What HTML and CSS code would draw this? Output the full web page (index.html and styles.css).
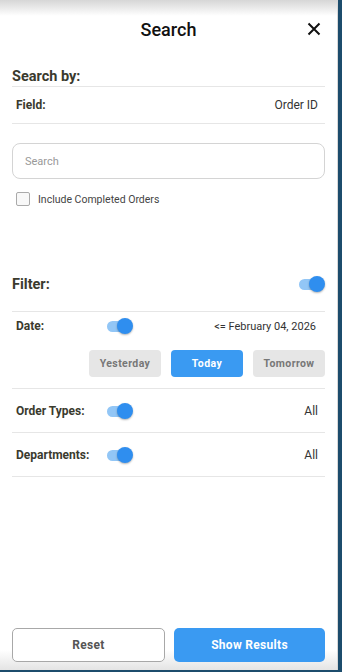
FILE: index.html
```html
<!DOCTYPE html>
<html lang="en">
<head>
  <meta charset="UTF-8" />
  <meta name="viewport" content="width=device-width, initial-scale=1.0" />
  <title>Search</title>
  <link rel="stylesheet" href="styles.css">
</head>
<body>
  <div class="panel">
    <div class="header">
      <span class="title">Search</span>
      <button class="close" aria-label="Close">
        <svg width="14" height="14" viewBox="0 0 14 14"><path d="M1.5 1.5 L12.5 12.5 M12.5 1.5 L1.5 12.5" stroke="#111" stroke-width="2" fill="none"/></svg>
      </button>
    </div>

    <div class="section-title">Search by:</div>
    <div class="row field-row">
      <span class="label">Field:</span>
      <span class="value">Order ID</span>
    </div>

    <input class="search-input" type="text" placeholder="Search" />

    <label class="check-row">
      <span class="checkbox"></span>
      <span>Include Completed Orders</span>
    </label>

    <div class="filter-head">
      <span class="section-title-plain">Filter:</span>
      <span class="toggle on"><span class="thumb"></span></span>
    </div>

    <div class="date-block">
      <div class="row date-row">
        <span class="label col">Date:</span>
        <span class="toggle on"><span class="thumb"></span></span>
        <span class="value push date-value">&lt;= February 04, 2026</span>
      </div>
      <div class="day-buttons">
        <button class="day">Yesterday</button>
        <button class="day active">Today</button>
        <button class="day">Tomorrow</button>
      </div>
    </div>

    <div class="row toggle-row">
      <span class="label col">Order Types:</span>
      <span class="toggle on"><span class="thumb"></span></span>
      <span class="value push">All</span>
    </div>
    <div class="row toggle-row">
      <span class="label col">Departments:</span>
      <span class="toggle on"><span class="thumb"></span></span>
      <span class="value push">All</span>
    </div>

    <div class="footer">
      <button class="btn-reset">Reset</button>
      <button class="btn-show">Show Results</button>
    </div>
  </div>
</body>
</html>
```

FILE: styles.css
```css
html, body {
  margin: 0;
  padding: 0;
}

body {
  font-family: Roboto, "Liberation Sans", Arial, sans-serif;
  background: #1c4c6c;
  color: #3a3a2e;
}

.panel {
  box-sizing: border-box;
  width: 338px;
  height: 670px;
  padding: 0 12px 8px 12px;
  display: flex;
  flex-direction: column;
  background: linear-gradient(#d6d6d6 0px, #ffffff 16px, #ffffff 650px, #e4e4e4 670px);
  border-right: 1px solid #d8d8d8;
}

.header {
  height: 58px;
  display: flex;
  align-items: center;
  justify-content: center;
  position: relative;
}

.title {
  font-size: 18px;
  font-weight: 500;
  color: #111;
}

.close {
  position: absolute;
  right: 4px;
  top: 22px;
  border: none;
  background: none;
  padding: 0;
  width: 14px;
  height: 14px;
  line-height: 0;
}

.section-title {
  padding-top: 10px;
  line-height: 18px;
  font-size: 14.5px;
  font-weight: 700;
  border-bottom: 1px solid #e6e6e6;
}

.row {
  display: flex;
  align-items: center;
  padding: 0 7px 0 4px;
  border-bottom: 1px solid #e6e6e6;
}

.field-row {
  height: 36px;
}

.label {
  font-size: 12px;
  font-weight: 700;
}

.label.col {
  width: 91px;
}

.value {
  margin-left: auto;
  font-size: 12px;
  color: #333;
}

.date-value {
  font-size: 11px;
}

.search-input {
  box-sizing: border-box;
  margin-top: 19px;
  height: 36px;
  width: 100%;
  border: 1px solid #d4d4d4;
  border-radius: 8px;
  padding: 0 12px;
  font-family: inherit;
  font-size: 11px;
  color: #333;
  outline: none;
}

.search-input::placeholder {
  color: #999;
}

.check-row {
  margin-top: 13px;
  display: flex;
  align-items: center;
  padding-left: 4px;
  font-size: 10.5px;
  color: #444;
}

.checkbox {
  box-sizing: border-box;
  width: 14px;
  height: 14px;
  border: 1px solid #aaa;
  border-radius: 2px;
  background: #f8f8f8;
  margin-right: 8px;
}

.filter-head {
  margin-top: 64px;
  height: 28px;
  padding-bottom: 13px;
  display: flex;
  align-items: center;
  justify-content: space-between;
  border-bottom: 1px solid #e6e6e6;
}

.section-title-plain {
  font-size: 14.5px;
  font-weight: 700;
}

.toggle {
  position: relative;
  display: inline-block;
  width: 26px;
  height: 16px;
}

.toggle::before {
  content: "";
  position: absolute;
  left: 0;
  top: 3px;
  width: 22px;
  height: 11px;
  border-radius: 6px;
  background: #92c6f6;
}

.toggle .thumb {
  position: absolute;
  right: 0;
  top: 0;
  width: 16px;
  height: 16px;
  border-radius: 50%;
  background: #2f8eef;
  box-shadow: 0 1px 2px rgba(0, 0, 0, 0.3);
}

.date-block {
  border-bottom: 1px solid #e6e6e6;
  padding-bottom: 11px;
}

.date-row {
  height: 28px;
  border-bottom: none;
  padding-right: 9px;
}

.day-buttons {
  margin-top: 10px;
  display: flex;
  justify-content: flex-end;
  gap: 10px;
}

.day {
  width: 72px;
  height: 27px;
  border: none;
  border-radius: 4px;
  background: #e6e6e6;
  color: #777;
  font-family: inherit;
  font-size: 10.5px;
  font-weight: 700;
  letter-spacing: 0.4px;
}

.day.active {
  background: #3a9af2;
  color: #fff;
}

.toggle-row {
  height: 43px;
}

.footer {
  margin-top: auto;
  display: flex;
  gap: 9px;
}

.footer button {
  flex: 1;
  height: 34px;
  border-radius: 5px;
  font-family: inherit;
  font-size: 12px;
  font-weight: 700;
  letter-spacing: 0.3px;
}

.btn-reset {
  background: #fff;
  border: 1px solid #a8a8a8;
  color: #555;
}

.btn-show {
  background: #3a9af2;
  border: none;
  color: #fff;
}
```
